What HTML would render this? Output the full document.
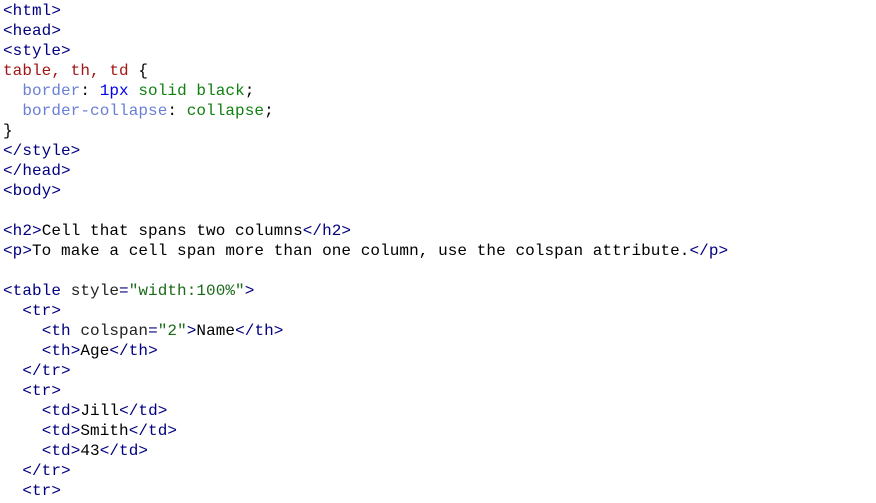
<!DOCTYPE html>
<html><head><style>
body{margin:0;background:#fff;width:876px;height:503px;overflow:hidden}
pre{margin:0;padding:1px 0 0 3px;font-family:"Liberation Mono",monospace;font-size:16px;line-height:20px;letter-spacing:0.067px;color:#000}
.t{color:#000080}.s{color:#a31515}.p{color:#6a7fd6}.n{color:#0000ee}.v{color:#108010}.a{color:#222}.q{color:#1a6a1a}
</style></head><body><pre><span class="t">&lt;html&gt;</span>
<span class="t">&lt;head&gt;</span>
<span class="t">&lt;style&gt;</span>
<span class="s">table, th, td</span> {
  <span class="p">border</span>: <span class="n">1px</span> <span class="v">solid black</span>;
  <span class="p">border-collapse</span>: <span class="v">collapse</span>;
}
<span class="t">&lt;/style&gt;</span>
<span class="t">&lt;/head&gt;</span>
<span class="t">&lt;body&gt;</span>

<span class="t">&lt;h2&gt;</span>Cell that spans two columns<span class="t">&lt;/h2&gt;</span>
<span class="t">&lt;p&gt;</span>To make a cell span more than one column, use the colspan attribute.<span class="t">&lt;/p&gt;</span>

<span class="t">&lt;table</span> <span class="a">style</span><span class="t">=</span><span class="q">"width:100%"</span><span class="t">&gt;</span>
  <span class="t">&lt;tr&gt;</span>
    <span class="t">&lt;th</span> <span class="a">colspan</span><span class="t">=</span><span class="q">"2"</span><span class="t">&gt;</span>Name<span class="t">&lt;/th&gt;</span>
    <span class="t">&lt;th&gt;</span>Age<span class="t">&lt;/th&gt;</span>
  <span class="t">&lt;/tr&gt;</span>
  <span class="t">&lt;tr&gt;</span>
    <span class="t">&lt;td&gt;</span>Jill<span class="t">&lt;/td&gt;</span>
    <span class="t">&lt;td&gt;</span>Smith<span class="t">&lt;/td&gt;</span>
    <span class="t">&lt;td&gt;</span>43<span class="t">&lt;/td&gt;</span>
  <span class="t">&lt;/tr&gt;</span>
  <span class="t">&lt;tr&gt;</span>
</pre></body></html>
